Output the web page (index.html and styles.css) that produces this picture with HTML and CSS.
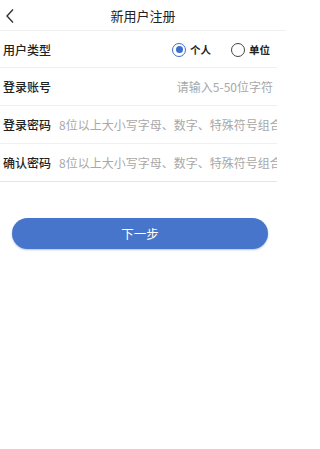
FILE: index.html
```html
<!DOCTYPE html>
<html lang="zh">
<head>
<meta charset="utf-8">
<link rel="stylesheet" href="styles.css">
</head>
<body>
<div class="page">
  <header class="nav">
    <span class="back"><svg width="10" height="16" viewBox="0 0 10 16"><path d="M8 1.5 L2 8 L8 14.5" fill="none" stroke="#333" stroke-width="1.4"/></svg></span>
    <h1 class="title">新用户注册</h1>
  </header>
  <div class="form">
    <div class="row">
      <span class="label">用户类型</span>
      <div class="radios">
        <label class="radio"><span class="dot on"></span>个人</label>
        <label class="radio"><span class="dot"></span>单位</label>
      </div>
    </div>
    <div class="row">
      <span class="label">登录账号</span>
      <span class="ph right">请输入5-50位字符</span>
    </div>
    <div class="row">
      <span class="label">登录密码</span>
      <span class="ph">8位以上大小写字母、数字、特殊符号组合</span>
    </div>
    <div class="row last">
      <span class="label">确认密码</span>
      <span class="ph">8位以上大小写字母、数字、特殊符号组合</span>
    </div>
  </div>
  <div class="actions">
    <button class="next">下一步</button>
  </div>
</div>
</body>
</html>
```

FILE: styles.css
```css
* { box-sizing: border-box; margin: 0; padding: 0; }
html, body { background: #fff; }
body {
  font-family: "Noto Sans CJK SC", "Noto Sans", sans-serif;
  color: #333;
  width: 286px;
  height: 449px;
  overflow: hidden;
}
.page { display: flex; flex-direction: column; }
.nav {
  height: 31px;
  position: relative;
  display: flex;
  align-items: center;
  justify-content: center;
  border-bottom: 1px solid #f0f0f0;
}
.back { position: absolute; left: 5px; top: 8px; display: flex; }
.title { font-size: 13px; font-weight: normal; color: #222; }
.form { padding-right: 9px; }
.row {
  height: 38px;
  display: flex;
  align-items: center;
  padding-left: 3px;
  border-bottom: 1px solid #f0f0f0;
  gap: 8px;
  white-space: nowrap;
  overflow: hidden;
}
.row:first-child { height: 37px; padding-top: 1px; }
.row.last { border-bottom: 1.5px solid #e4e4e4; }
.label { font-size: 12px; font-weight: 500; color: #222; flex: none; }
.ph { font-size: 12px; color: #a8a8a8; overflow: hidden; flex: 1; text-overflow: clip; }
.ph.right { text-align: right; padding-right: 4px; }
.radios { margin-left: auto; display: flex; gap: 20px; padding-right: 7px; }
.radio { display: flex; align-items: center; gap: 4px; font-size: 10.5px; font-weight: 700; color: #222; }
.dot {
  width: 14px; height: 14px; border-radius: 50%;
  border: 1.3px solid #444;
  display: flex; align-items: center; justify-content: center;
}
.dot.on { border-color: #3a6fd0; }
.dot.on::after { content: ""; width: 7px; height: 7px; border-radius: 50%; background: #3a6fd0; }
.actions { padding: 36px 18px 0 12px; }
.next {
  width: 100%;
  height: 31px;
  border: none;
  border-radius: 16px;
  background: #4775cc;
  color: #fff;
  font-family: inherit;
  font-size: 12.5px;
  box-shadow: 0 1px 2px rgba(70,110,200,0.4);
}
```
